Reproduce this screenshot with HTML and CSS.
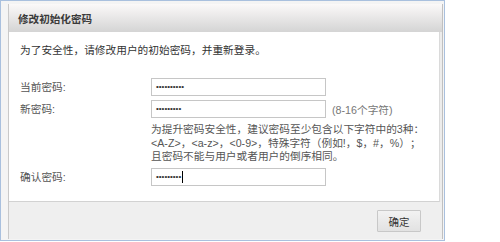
FILE: index.html
```html
<!DOCTYPE html>
<html lang="zh-CN">
<head>
<meta charset="utf-8">
<title>修改初始化密码</title>
<link rel="stylesheet" href="styles.css">
</head>
<body>
<div class="window">
  <div class="dialog">
    <div class="header">修改初始化密码</div>
    <div class="body">
      <p class="intro">为了安全性，请修改用户的初始密码，并重新登录。</p>
      <div class="form">
        <label class="label">当前密码:</label>
        <div class="field"><div class="input"><span class="dots">••••••••••</span></div></div>
        <label class="label">新密码:</label>
        <div class="field"><div class="input"><span class="dots">•••••••••</span></div><span class="hint">(8-16个字符)</span></div>
        <div class="help">为提升密码安全性，建议密码至少包含以下字符中的3种：<br>&lt;A-Z&gt;，&lt;a-z&gt;，&lt;0-9&gt;，特殊字符（例如!，$，#，%）；<br>且密码不能与用户或者用户的倒序相同。</div>
        <label class="label">确认密码:</label>
        <div class="field"><div class="input"><span class="dots">•••••••••</span><span class="caret"></span></div></div>
      </div>
    </div>
    <div class="footer">
      <button class="btn" type="button">确定</button>
    </div>
  </div>
</div>
</body>
</html>
```

FILE: styles.css
```css
html, body {
  margin: 0;
  padding: 0;
  background: #ffffff;
}

body {
  font-family: "Liberation Sans", "Noto Sans CJK TC", sans-serif;
  font-size: 10.7px;
  color: #333;
  text-spacing-trim: space-all;
}

.window {
  box-sizing: border-box;
  width: 445px;
  height: 241px;
  border: 1px solid #a9c0de;
  padding: 3px 1px 1px 7px;
  background: #f4f4f4;
  display: flex;
}

.dialog {
  flex: 1;
  display: flex;
  flex-direction: column;
  border-left: 1px solid #c9c9c9;
  border-right: 1px solid #c0c0c0;
  background: #ececec;
}

.header {
  height: 28px;
  flex: none;
  display: flex;
  align-items: center;
  padding-left: 9px;
  background: linear-gradient(#fbf9f9, #d4d4d4);
  font-weight: bold;
  font-size: 10.6px;
  color: #3a3a3a;
}

.body {
  box-sizing: border-box;
  height: 170px;
  flex: none;
  margin-right: 2px;
  background: #ffffff;
  border-right: 1px solid #dadada;
  border-bottom: 1px solid #d2d2d2;
  padding: 12px 0 0 11px;
}

.intro {
  margin: 0;
  line-height: 12px;
  color: #333;
}

.form {
  margin-top: 22px;
  display: grid;
  grid-template-columns: 131px 1fr;
  row-gap: 4px;
  align-items: center;
}

.label {
  line-height: 18px;
  color: #555;
}

.field {
  display: flex;
  align-items: center;
}

.input {
  box-sizing: border-box;
  width: 175px;
  height: 18px;
  border: 1px solid #c6c6c6;
  background: #fff;
  display: flex;
  align-items: center;
  padding-left: 4px;
}

.dots {
  font-size: 8px;
  line-height: 8px;
  color: #333;
}

.caret {
  width: 1px;
  height: 12px;
  background: #000;
  margin-left: 1px;
}

.hint {
  margin-left: 6px;
  color: #777;
}

.help {
  grid-column: 2;
  margin-top: 1px;
  line-height: 13.5px;
  color: #555;
}

.footer {
  flex: 1;
  display: flex;
  justify-content: flex-end;
  align-items: flex-start;
  padding: 8px 21px 0 0;
  background: #efefef;
}

.btn {
  box-sizing: border-box;
  width: 44px;
  height: 22px;
  border: 1px solid #c8c8c8;
  border-radius: 1px;
  background: linear-gradient(#f2f2f2, #e2e2e2);
  font-family: "Liberation Sans", "Noto Sans CJK TC", sans-serif;
  font-size: 10.5px;
  color: #333;
  padding: 0;
}
```
